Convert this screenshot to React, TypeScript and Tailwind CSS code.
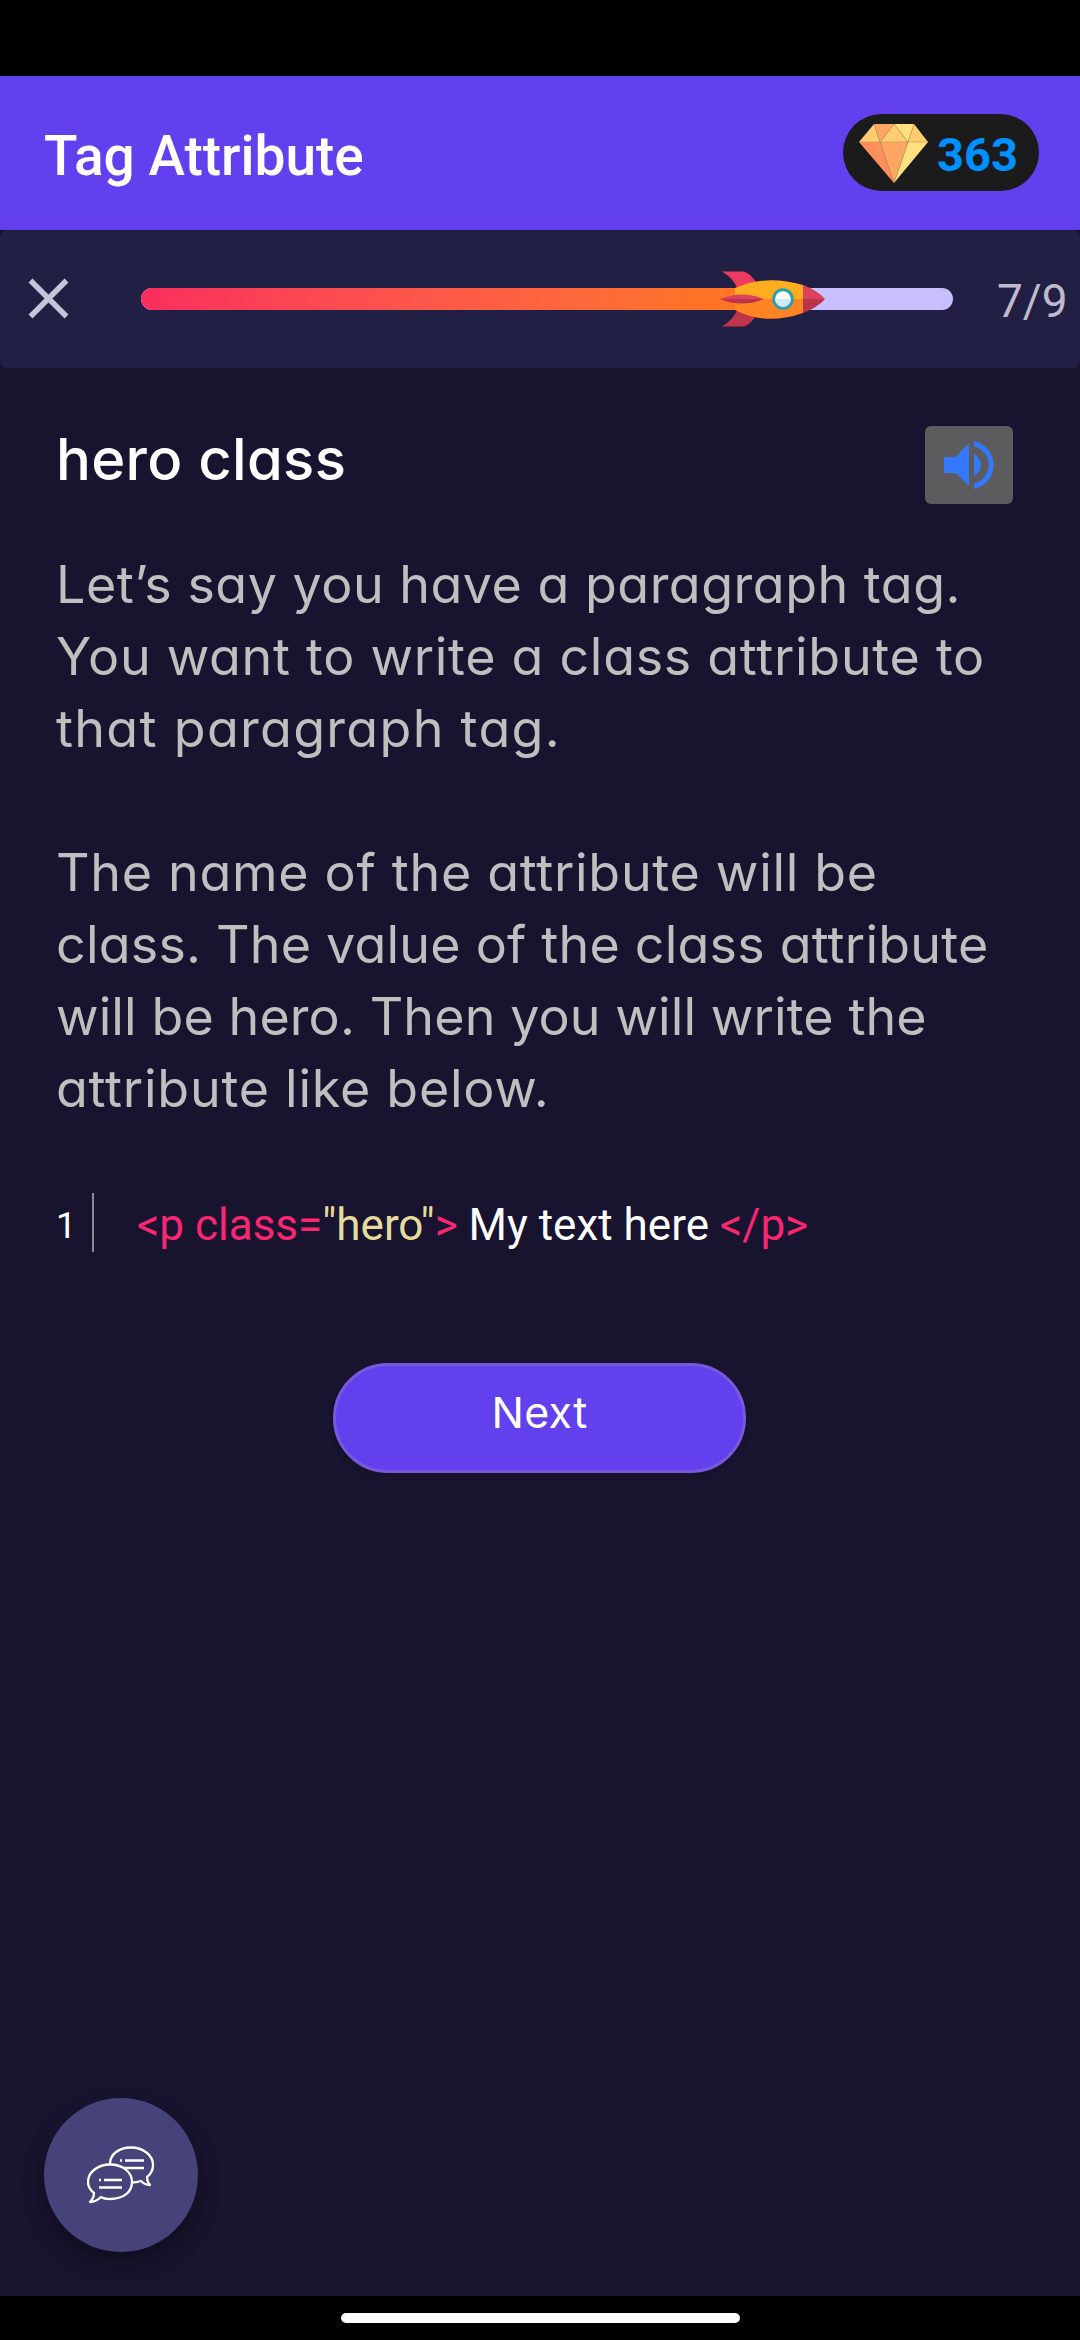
const GEO = "font-['Inter',sans-serif] [font-feature-settings:'cv11']";

type Line = { text: string; tracking: string };

const paragraphs: Line[][] = [
  [
    { text: "Let’s say you have a paragraph tag.", tracking: "tracking-[0.5px]" },
    { text: "You want to write a class attribute to", tracking: "tracking-[0.7px]" },
    { text: "that paragraph tag.", tracking: "tracking-[1.3px]" },
  ],
  [
    { text: "The name of the attribute will be", tracking: "tracking-[0.7px]" },
    { text: "class. The value of the class attribute", tracking: "tracking-[0.2px]" },
    { text: "will be hero. Then you will write the", tracking: "tracking-[0.1px]" },
    { text: "attribute like below.", tracking: "tracking-[0.75px]" },
  ],
];

function Gem() {
  return (
    <svg className="ml-4 h-[60px] w-[70px] shrink-0" viewBox="0 0 70 60">
      <path d="M15 1h20L21 19z" fill="#ffa762" />
      <path d="M15 1 0 19h21z" fill="#ffcd71" />
      <path d="M35 1 21 19h28z" fill="#ffcd71" />
      <path d="M35 1h20l-6 18z" fill="#ffe07f" />
      <path d="M55 1l14 18H49z" fill="#ffcd71" />
      <path d="M0 19h21l14 41z" fill="#ff8f5c" />
      <path d="M21 19h28L35 60z" fill="#ffa762" />
      <path d="M49 19h20L35 60z" fill="#ffe07f" />
      <path d="M0 19h69M15 1l6 18 14 41 14-41 6-18M21 19 35 1l14 18" fill="none" stroke="#b98d52" strokeWidth=".7" opacity=".7" />
    </svg>
  );
}

function Rocket() {
  return (
    <svg className="absolute -top-[17px] left-[579px] h-[56px] w-[106px]" viewBox="0 0 106 56">
      <path d="M2 .5h22q8 3 14 14L18 18Q12 6 2 .5z" fill="#ee3a5c" />
      <path d="M2 55.500h22q8-3 14-14L18 38Q12 50 2 55.500z" fill="#bf3549" />
      <path d="M15 17Q46 3 83 14l4 14H15z" fill="#ffad1e" />
      <path d="M15 39Q46 55 83 42l4-14H15z" fill="#ff8524" />
      <path d="M83 14q14 5 22 14H83z" fill="#dd425d" />
      <path d="M83 42q14-5 22-14H83z" fill="#bb3349" />
      <path d="M0 28Q22 19 44 28z" fill="#dd425d" />
      <path d="M0 28Q22 37 44 28z" fill="#bb3349" />
      <circle cx="63" cy="28" r="10.800" fill="#2aa0a8" />
      <circle cx="63" cy="28" r="7.800" fill="#fff" />
      <path d="M55.200 28h15.600a7.800 7.800 0 0 1-15.600 0z" fill="#d0e8fa" />
    </svg>
  );
}

function Speaker() {
  return (
    <svg className="h-[50px] w-[50px]" viewBox="0 0 50 50" fill="#3478ff">
      <path d="M0 17h12L25 3v43L12 33H0z" />
      <path d="M30 14q7 4 7 11t-7 11z" />
      <path d="M30 1a24.500 24.500 0 0 1 0 48v-5.500a19 19 0 0 0 0-37z" />
    </svg>
  );
}

function Chat() {
  return (
    <svg className="h-[58px] w-[68px]" viewBox="0 0 68 58" fill="none" stroke="#fff" strokeWidth="2.300" strokeLinejoin="round">
      <path d="M23 18C23 8 32 1.500 44 1.500S66 9 66 19c0 6-2 9-6 12 0 4 1 6 3 8-4 0-7-2-9-4-3 1-6 1.500-9 1.500" />
      <path d="M23 18.500c12 0 22 7 22 17.500s-9 17-22 17c-3 0-6 0-9-2-3 3-6 5-11 5 3-3 4-5 4-9-4-3-6-6-6-11 0-10 10-17.500 22-17.500z" />
      <path d="M38 14.500h19M37 22h20M17 34h18M12 41.500h23M33 14.500h2M12 34h2" strokeWidth="2.500" />
    </svg>
  );
}

export default function App() {
  return (
    <div className="flex h-[2340px] w-[1080px] flex-col overflow-hidden bg-[#18142f] font-['Roboto',sans-serif]">
      <div className="h-[76px] bg-black" />
      <header className="flex h-[154px] items-center justify-between bg-[#6240ee] pr-[41px] pl-[44px]">
        <h1 className="pt-[6px] text-[55px] leading-none font-medium whitespace-nowrap text-white">Tag Attribute</h1>
        <div className="mb-px flex h-[77px] w-[196px] items-center rounded-full bg-[#1b1b1b]">
          <Gem />
          <span className="ml-[8px] pt-1 text-[47px] leading-none font-bold text-[#0090ff]">363</span>
        </div>
      </header>
      <section className="flex h-[138px] items-center rounded-lg bg-[#221f45]">
        <svg className="ml-[28px] h-[42px] w-[42px] shrink-0" viewBox="0 0 42 42">
          <path d="M2.500 2.500 38.500 38.500M38.500 2.500 2.500 38.500" stroke="#c5c5d9" strokeWidth="5.500" />
        </svg>
        <div className="relative ml-[71px] h-[22px] w-[812px] rounded-full bg-[#c8bfff]">
          <div className="h-full w-[632px] rounded-full bg-linear-to-r from-[#fa2d5d] to-[#ff7a18]" />
          <Rocket />
        </div>
        <span className="ml-[44px] pt-[3px] text-[46px] leading-none text-[#bdbbcb]">7/9</span>
      </section>
      <main className="flex flex-1 flex-col px-[56px]">
        <div className="mt-[58px] flex h-[78px] justify-between pr-[11px]">
          <h2 className={`${GEO} text-[58px] leading-[66px] font-medium tracking-[0.3px] text-white`}>hero class</h2>
          <button className="flex h-[78px] w-[88px] items-center justify-center rounded-md bg-[#5c5c5e]">
            <Speaker />
          </button>
        </div>
        <div className="mt-[45px] flex flex-col gap-[72px]">
          {paragraphs.map((p, i) => (
            <p key={i} className={`${GEO} text-[52px] leading-[72px] whitespace-nowrap text-[#bfbfbf]`}>
              {p.map((l) => (
                <span key={l.text} className={`block ${l.tracking}`}>{l.text}</span>
              ))}
            </p>
          ))}
        </div>
        <div className="mt-[68px] flex h-[59px] items-center">
          <span className="w-[36px] pt-[7px] text-[36px] leading-none text-white">1</span>
          <div className="h-full w-[2px] bg-[#8b8997]" />
          <code className="ml-[43px] pt-[4px] text-[44px] leading-none whitespace-pre text-white font-['Roboto']">
            <span className="text-[#f92672]">&lt;p class=</span>
            <span className="text-[#e6db9a]">"hero"</span>
            <span className="text-[#f92672]">&gt;</span>
            {" My text here "}
            <span className="text-[#f92672]">&lt;/p&gt;</span>
          </code>
        </div>
        <button className={`${GEO} mt-[111px] ml-[277px] h-[110px] w-[413px] rounded-full border-[3px] border-[#7958dd] bg-[#6240ee] pb-[11px] text-[43px] tracking-[0.3px] text-white shadow-md`}>
          Next
        </button>
        <button className="mt-auto mb-[44px] -ml-[12px] flex h-[154px] w-[154px] items-center justify-center rounded-full bg-[#46427a] shadow-[0_10px_20px_rgba(0,0,0,0.35)]">
          <Chat />
        </button>
      </main>
      <footer className="flex h-[44px] justify-center bg-black pt-[17px]">
        <div className="h-[10px] w-[399px] rounded-full bg-white" />
      </footer>
    </div>
  );
}
